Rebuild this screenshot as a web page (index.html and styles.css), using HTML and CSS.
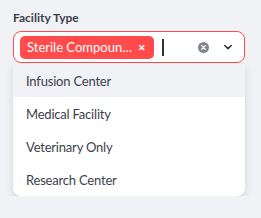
FILE: index.html
```html
<!DOCTYPE html>
<html lang="en">
<head>
<meta charset="UTF-8">
<meta name="viewport" content="width=device-width, initial-scale=1.0">
<title>Facility Type</title>
<link rel="stylesheet" href="styles.css">
</head>
<body>
<div class="field">
<label class="field-label">Facility Type</label>
<div class="select">
<span class="tag"><span class="tag-text">Sterile Compoun…</span><span class="tag-x">&#x2715;</span></span>
<span class="caret"></span>
<span class="controls">
<svg class="clear" width="11" height="11" viewBox="0 0 11 11"><circle cx="5.5" cy="5.5" r="5.5" fill="#83858c"/><path d="M3.6 3.6 L7.4 7.4 M7.4 3.6 L3.6 7.4" stroke="#fff" stroke-width="1.3" stroke-linecap="round"/></svg>
<svg class="chevron" width="10" height="10" viewBox="0 0 10 10"><path d="M1.8 3.5 L5 6.6 L8.2 3.5" fill="none" stroke="#31333f" stroke-width="1.6" stroke-linecap="round" stroke-linejoin="round"/></svg>
</span>
</div>
<ul class="menu">
<li class="option active">Infusion Center</li>
<li class="option">Medical Facility</li>
<li class="option">Veterinary Only</li>
<li class="option">Research Center</li>
</ul>
</div>
</body>
</html>
```
FILE: styles.css
```css
body { margin: 0; padding: 0; background-color: #f0f2f6; font-family: "Lato", "Noto Sans", sans-serif; color: #31333f; }
.field { width: 232px; padding: 10px 0 0 13px; }
.field-label { display: block; font-size: 12px; font-weight: 700; line-height: 16px; margin-bottom: 5px; color: #3d3f4a; }
.select { display: flex; align-items: center; height: 30px; border: 1px solid #ff4b4b; border-radius: 8px; background-color: #fff; padding: 0 6px; }
.tag { display: flex; align-items: center; height: 23px; width: 134px; box-sizing: border-box; padding: 0 8px 0 7px; background-color: #ff4b4b; color: #fff; border-radius: 5px; font-size: 13px; }
.tag-text { flex: 1; white-space: nowrap; }
.tag-x { font-size: 9px; margin-left: 6px; font-weight: 700; }
.caret { width: 2px; height: 17px; background-color: #31333f; margin-left: 8px; }
.controls { margin-left: auto; display: flex; align-items: center; gap: 14px; padding-right: 5px; }
.clear, .chevron { display: block; }
.menu { list-style: none; margin: 1px 0 0 0; padding: 0; background-color: #fff; border-radius: 0 0 8px 8px; box-shadow: 0 4px 8px rgba(0, 0, 0, 0.12); overflow: hidden; }
.option { height: 33px; line-height: 34px; padding-left: 13px; font-size: 13px; letter-spacing: -0.2px; color: #3d3f4a; }
.option.active { background-color: #f0f2f6; }
```
